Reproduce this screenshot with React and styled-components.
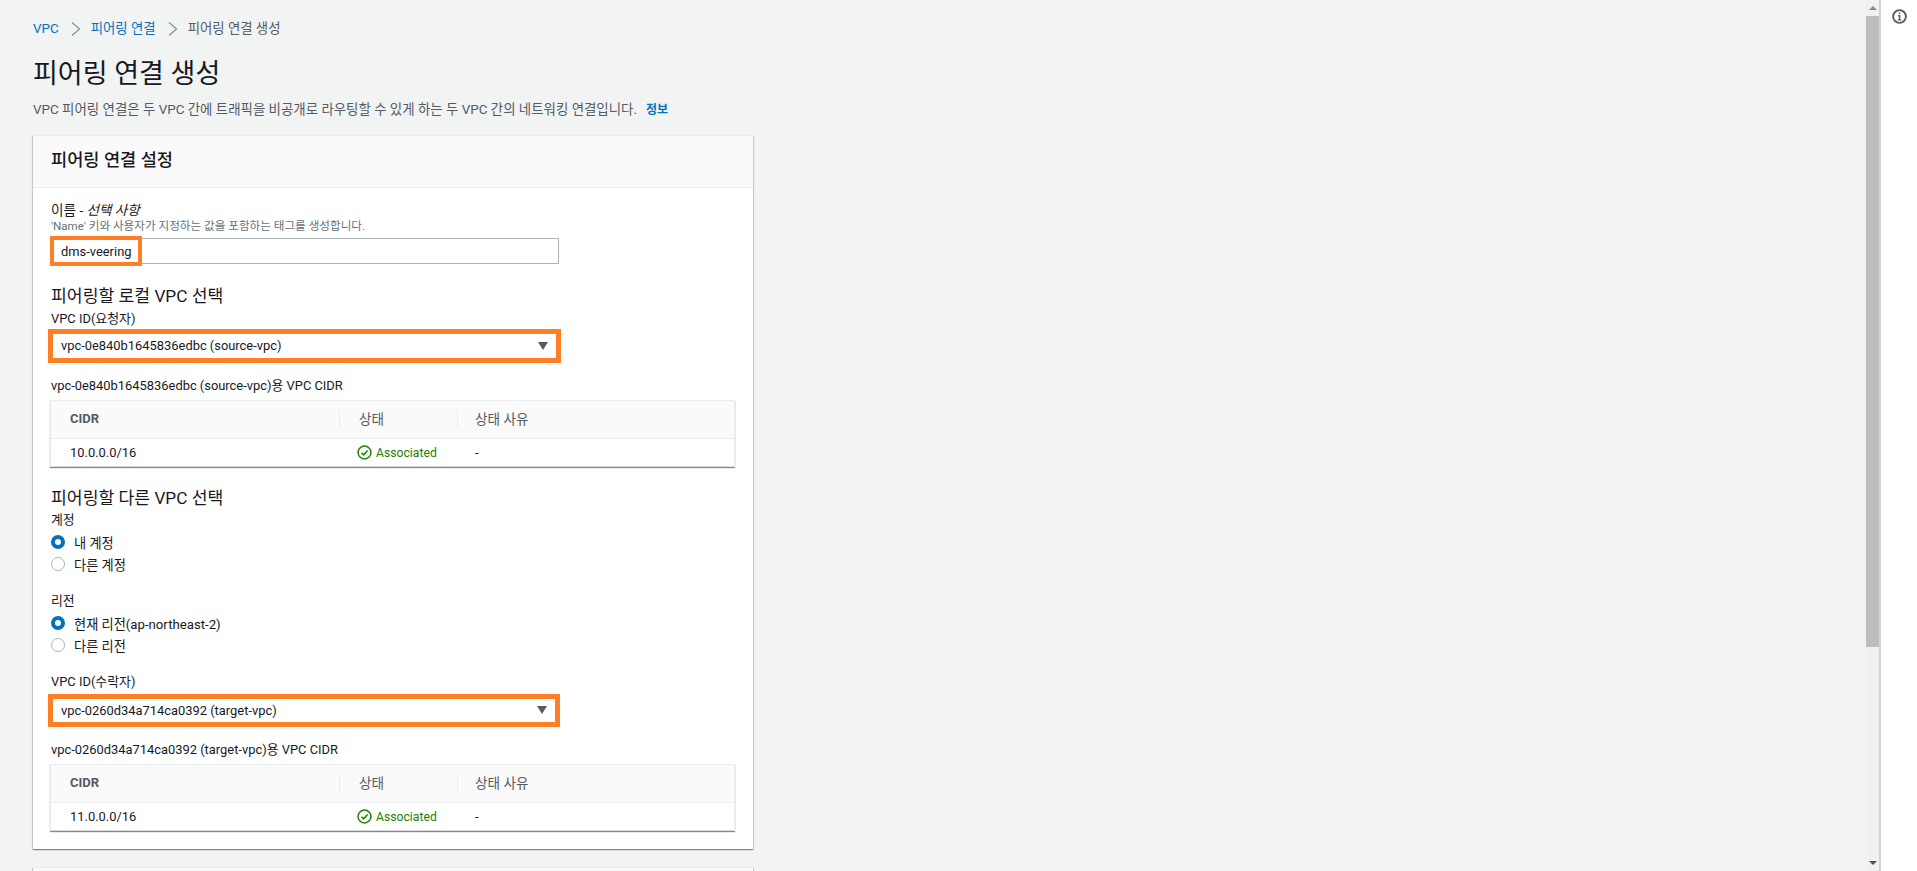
import React from 'react';
import styled, { createGlobalStyle } from 'styled-components';

const GlobalStyle = createGlobalStyle`
  html, body {
    margin: 0;
    padding: 0;
    height: 100%;
    overflow: hidden;
    background: #fff;
  }
  body {
    font-family: Roboto, "Noto Sans CJK KR", sans-serif;
    font-size: 14px;
    color: #16191f;
  }
  * {
    box-sizing: border-box;
  }
`;

const Shell = styled.div`
  display: flex;
  width: 1917px;
  height: 871px;
  overflow: hidden;
`;

const Main = styled.main`
  flex: 0 0 1866px;
  height: 871px;
  overflow: hidden;
  padding: 19px 0 0 33px;
  background: #f2f3f3;
`;

const Scrollbar = styled.div`
  flex: 0 0 15px;
  display: flex;
  flex-direction: column;
  align-items: stretch;
  background: #f1f1f1;
  border-right: 2px solid #d2d2d2;
`;

const ScrollButton = styled.div`
  flex: 0 0 16px;
  display: flex;
  align-items: center;
  justify-content: center;
`;

const ScrollThumb = styled.div`
  flex: 0 0 631px;
  background: #bdbdbd;
`;

const ScrollTrack = styled.div`
  flex: 1;
`;

const Caret = styled.span`
  width: 0;
  height: 0;
  border-left: 4px solid transparent;
  border-right: 4px solid transparent;
  ${(p) => (p.$up ? 'border-bottom: 4px solid #8a8a8a;' : 'border-top: 4px solid #505050;')}
`;

const SidePanel = styled.aside`
  flex: 1;
  display: flex;
  justify-content: center;
  padding: 9px 0 0;
  background: #fff;
`;

const Breadcrumbs = styled.nav`
  display: flex;
  align-items: center;
  height: 20px;
  font-size: 13.4px;
  line-height: 20px;
`;

const Crumb = styled.a`
  color: ${(p) => (p.$current ? '#545b64' : '#0073bb')};
`;

const CrumbSep = styled.svg`
  width: 12px;
  height: 14px;
  margin: 0 9px 0 11px;
  fill: none;
  stroke: #879596;
  stroke-width: 1.3;
`;

const Title = styled.h1`
  margin: 17px 0 0;
  font-size: 27px;
  line-height: 36px;
  font-weight: 400;
  color: #16191f;
`;

const Description = styled.p`
  margin: 8px 0 0;
  font-size: 13.45px;
  line-height: 20px;
  color: #545b64;
`;

const InfoLink = styled.a`
  margin-left: 9px;
  font-size: 12px;
  font-weight: 700;
  color: #0073bb;
`;

const Card = styled.section`
  width: 720px;
  margin-top: 15px;
  background: #fff;
  border-top: 1px solid #eaeded;
  box-shadow: 0 1px 1px 0 rgba(0, 28, 36, 0.3), 1px 1px 1px 0 rgba(0, 28, 36, 0.15), -1px 1px 1px 0 rgba(0, 28, 36, 0.15);
`;

const NextCard = styled(Card)`
  margin-top: 18px;
  height: 60px;
  background: #fafafa;
`;

const CardHeader = styled.header`
  height: 52px;
  padding: 0 18px 3px;
  display: flex;
  align-items: center;
  background: #fafafa;
  border-bottom: 1px solid #eaeded;
`;

const CardTitle = styled.h2`
  margin: 0;
  font-size: 17.6px;
  font-weight: 500;
  line-height: 24px;
`;

const CardBody = styled.div`
  padding: 11px 18px 18px;
`;

const Label = styled.div`
  height: 20px;
  margin-top: ${(p) => p.$top || 0}px;
  padding-top: 2px;
  font-size: ${(p) => p.$size || 12.9}px;
  line-height: 18px;
`;

const Hint = styled.div`
  font-size: 11.6px;
  line-height: 14px;
  color: #687078;
`;

const NameField = styled.div`
  position: relative;
  width: 507px;
  height: 26px;
  margin: 5px 0 0 1px;
  background: #fff;
  border: 1px solid #aab7b8;
`;

const NameHighlight = styled.div`
  position: absolute;
  left: -3px;
  top: -3px;
  width: 92px;
  height: 30px;
  padding-left: 7px;
  display: flex;
  align-items: center;
  white-space: nowrap;
  background: #fff;
  border: 4px solid #ff7f27;
  font-size: 12.9px;
`;

const SectionHeading = styled.h3`
  height: 24px;
  margin: ${(p) => p.$top}px 0 0;
  padding-top: 2px;
  font-size: 17.2px;
  font-weight: 400;
  line-height: 22px;
`;

const Select = styled.div`
  display: flex;
  align-items: center;
  justify-content: space-between;
  width: ${(p) => p.$width}px;
  height: ${(p) => p.$height}px;
  margin: ${(p) => p.$top}px 0 0 -3px;
  padding: 0 8px 1px 8px;
  background: #fff;
  border: 5px solid #ff7f27;
  font-size: 12.9px;
`;

const SelectCaret = styled.span`
  width: 0;
  height: 0;
  border-left: 5px solid transparent;
  border-right: 5px solid transparent;
  border-top: 8px solid #545b64;
`;

const TableBox = styled.div`
  width: 685px;
  margin: ${(p) => p.$top}px 0 0 -1px;
  background: #fff;
  border: 1px solid #eaeded;
  border-bottom: none;
  box-shadow: 0 1px 1px 0 rgba(0, 28, 36, 0.5);
`;

const Row = styled.div`
  display: grid;
  grid-template-columns: 288px 118px 1fr;
  align-items: center;
`;

const HeadRow = styled(Row)`
  height: 38px;
  padding-bottom: 2px;
  background: #fafafa;
  border-bottom: 1px solid #eaeded;
`;

const BodyRow = styled(Row)`
  height: 28px;
  border-bottom: 1px solid #d5dbdb;
`;

const HeadCell = styled.div`
  height: 18px;
  padding-left: ${(p) => p.$pad}px;
  line-height: 18px;
  font-weight: ${(p) => (p.$bold ? 700 : 400)};
  font-size: ${(p) => (p.$bold ? 13 : 13.6)}px;
  color: #545b64;
  ${(p) => (p.$divider ? 'border-left: 1px solid #eaeded;' : '')}
`;

const Cell = styled.div`
  display: flex;
  align-items: center;
  gap: 4px;
  padding-left: ${(p) => p.$pad}px;
  font-size: ${(p) => (p.$ok ? 12.2 : 12.9)}px;
  color: ${(p) => (p.$ok ? '#1d8102' : '#16191f')};
`;

const RadioRow = styled.div`
  display: flex;
  align-items: center;
  height: 22px;
  margin-top: ${(p) => p.$top || 0}px;
  font-size: 13.2px;
`;

const RadioDot = styled.span`
  flex: none;
  width: 14px;
  height: 14px;
  margin-right: 9px;
  border-radius: 50%;
  background: #fff;
  border: ${(p) => (p.$checked ? '4px solid #0073bb' : '1px solid #aab7b8')};
`;

const CheckCircle = () => (
  <svg width="15" height="15" viewBox="0 0 16 16" fill="none" stroke="#1d8102" strokeWidth="1.6">
    <circle cx="8" cy="8" r="6.9" />
    <path d="M4.8 8.2l2.3 2.3 4.2-4.6" />
  </svg>
);

const InfoIcon = () => (
  <svg width="15" height="15" viewBox="0 0 16 16" fill="none" stroke="#545b64" strokeWidth="2">
    <circle cx="8" cy="8" r="6.8" />
    <path d="M8 3.6v1.8M6.4 7.2H8.1v4.4M6.2 11.6h3.6" strokeWidth="1.5" />
  </svg>
);

const CidrTable = ({ cidr }) => (
  <TableBox $top={5}>
    <HeadRow>
      <HeadCell $pad={19} $bold>CIDR</HeadCell>
      <HeadCell $pad={19} $divider>상태</HeadCell>
      <HeadCell $pad={17} $divider>상태 사유</HeadCell>
    </HeadRow>
    <BodyRow>
      <Cell $pad={19}>{cidr}</Cell>
      <Cell $pad={18} $ok><CheckCircle />Associated</Cell>
      <Cell $pad={18}>-</Cell>
    </BodyRow>
  </TableBox>
);

const VpcSelect = ({ top, width, height, children }) => (
  <Select $top={top} $width={width} $height={height}>
    <span>{children}</span>
    <SelectCaret />
  </Select>
);

const Chevron = () => (
  <CrumbSep viewBox="0 0 12 14"><path d="M2 .5l7.5 6.5L2 13.5" /></CrumbSep>
);

export default function App() {
  return (
    <Shell>
      <GlobalStyle />
      <Main>
        <Breadcrumbs>
          <Crumb>VPC</Crumb>
          <Chevron />
          <Crumb>피어링 연결</Crumb>
          <Chevron />
          <Crumb $current>피어링 연결 생성</Crumb>
        </Breadcrumbs>
        <Title>피어링 연결 생성</Title>
        <Description>
          VPC 피어링 연결은 두 VPC 간에 트래픽을 비공개로 라우팅할 수 있게 하는 두 VPC 간의 네트워킹 연결입니다.
          <InfoLink>정보</InfoLink>
        </Description>

        <Card>
          <CardHeader>
            <CardTitle>피어링 연결 설정</CardTitle>
          </CardHeader>
          <CardBody>
            <Label $size={13.6}>이름 - <i>선택 사항</i></Label>
            <Hint>'Name' 키와 사용자가 지정하는 값을 포함하는 태그를 생성합니다.</Hint>
            <NameField>
              <NameHighlight>dms-veering</NameHighlight>
            </NameField>

            <SectionHeading $top={19}>피어링할 로컬 VPC 선택</SectionHeading>
            <Label $top={1}>VPC ID(요청자)</Label>
            <VpcSelect top={1} width={513} height={34}>vpc-0e840b1645836edbc (source-vpc)</VpcSelect>
            <Label $top={12}>vpc-0e840b1645836edbc (source-vpc)용 VPC CIDR</Label>
            <CidrTable cidr="10.0.0.0/16" />

            <SectionHeading $top={18}>피어링할 다른 VPC 선택</SectionHeading>
            <Label>계정</Label>
            <RadioRow $top={2}><RadioDot $checked />내 계정</RadioRow>
            <RadioRow><RadioDot />다른 계정</RadioRow>

            <Label $top={15}>리전</Label>
            <RadioRow $top={2}><RadioDot $checked />현재 리전(ap-northeast-2)</RadioRow>
            <RadioRow><RadioDot />다른 리전</RadioRow>

            <Label $top={15}>VPC ID(수락자)</Label>
            <VpcSelect top={3} width={512} height={33}>vpc-0260d34a714ca0392 (target-vpc)</VpcSelect>
            <Label $top={12}>vpc-0260d34a714ca0392 (target-vpc)용 VPC CIDR</Label>
            <CidrTable cidr="11.0.0.0/16" />
          </CardBody>
        </Card>
        <NextCard />
      </Main>
      <Scrollbar>
        <ScrollButton><Caret $up /></ScrollButton>
        <ScrollThumb />
        <ScrollTrack />
        <ScrollButton><Caret /></ScrollButton>
      </Scrollbar>
      <SidePanel>
        <InfoIcon />
      </SidePanel>
    </Shell>
  );
}
